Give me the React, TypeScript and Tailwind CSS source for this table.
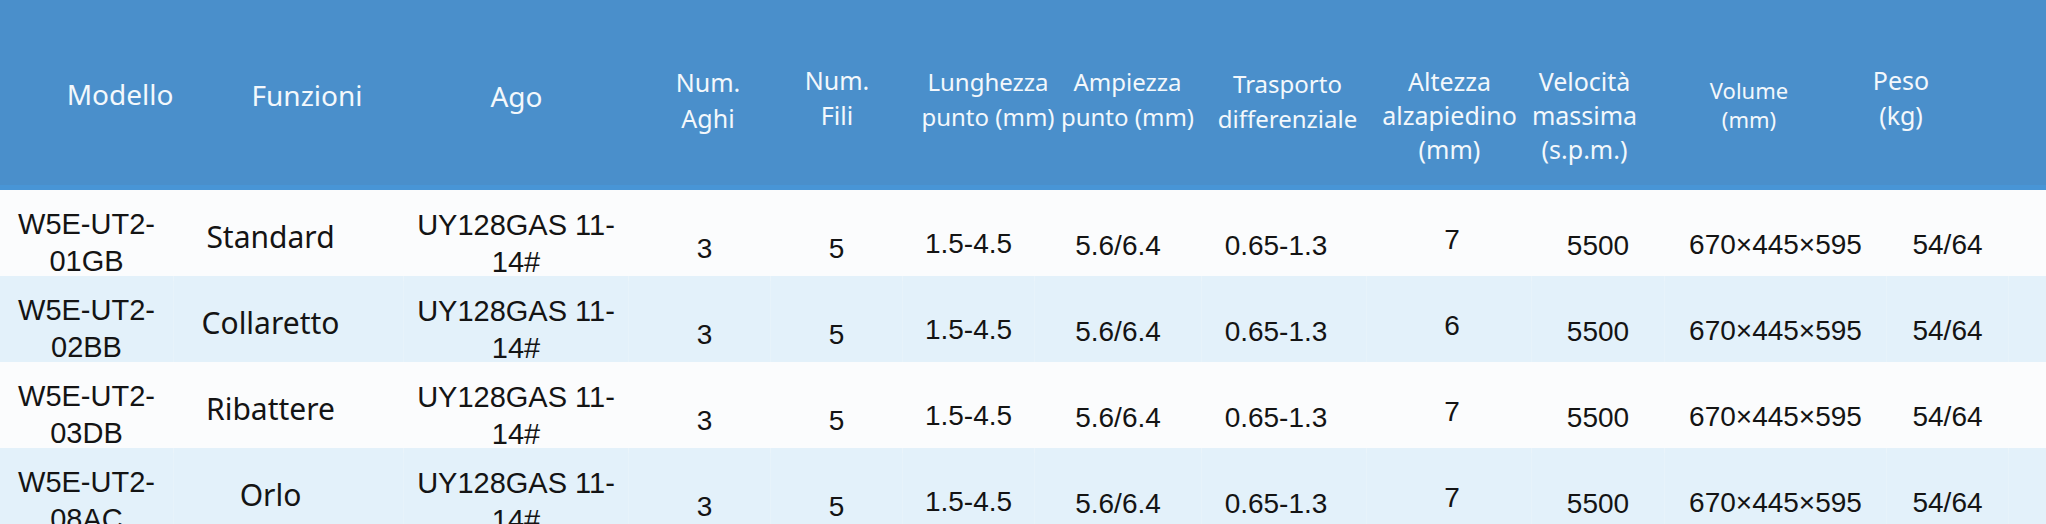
import React from "react";

type Head = { lines: string[]; cls: string };

const heads: Head[] = [
    { lines: ["Modello"], cls: "pl-[66px] pt-[77px] text-[28px] leading-[35px]" },
    { lines: ["Funzioni"], cls: "pl-[36px] pt-[78px] text-[28px] leading-[35px]" },
    { lines: ["Ago"], cls: "pt-[79px] text-[28px] leading-[35px]" },
    { lines: ["Num.", "Aghi"], cls: "pl-[16px] pt-[64px] text-[25px] leading-[36px]" },
    { lines: ["Num.", "Fili"], cls: "pt-[63px] text-[25px] leading-[35px]" },
    { lines: ["Lunghezza", "punto (mm)"], cls: "pl-[38px] pt-[64px] text-[24px] leading-[35px]" },
    { lines: ["Ampiezza", "punto (mm)"], cls: "pl-[18px] pt-[64px] text-[24px] leading-[35px]" },
    { lines: ["Trasporto", "differenziale"], cls: "pl-[6px] pt-[66px] text-[24px] leading-[35px]" },
    { lines: ["Altezza", "alzapiedino", "(mm)"], cls: "pt-[64px] text-[25px] leading-[34px]" },
    { lines: ["Velocità", "massima", "(s.p.m.)"], cls: "pr-[28px] pt-[64px] text-[25px] leading-[34px]" },
    { lines: ["Volume", "(mm)"], cls: "pr-[54px] pt-[76px] text-[22px] leading-[29px]" },
    { lines: ["Peso", "(kg)"], cls: "pr-[94px] pt-[63px] text-[25px] leading-[35px]" },
];

const rows = [
    { model: ["W5E-UT2-", "01GB"], fn: "Standard", foot: "7" },
    { model: ["W5E-UT2-", "02BB"], fn: "Collaretto", foot: "6" },
    { model: ["W5E-UT2-", "03DB"], fn: "Ribattere", foot: "7" },
    { model: ["W5E-UT2-", "08AC"], fn: "Orlo", foot: "7" },
];

const grid =
    "grid grid-cols-[174px_230px_225px_142px_132px_132px_167px_165px_165px_133px_222px_122px_1fr]";

const arial = "font-['Liberation_Sans',Arial,sans-serif]";
const noto = "font-['Noto_Sans',sans-serif]";

function Num({ v, cls }: { v: string; cls: string }) {
    return (
        <div className={`flex justify-center whitespace-nowrap border-r border-white/15 text-[28px] leading-[36px] ${arial} ${cls}`}>
            {v}
        </div>
    );
}

export default function App() {
    return (
        <div className="h-screen w-full overflow-hidden bg-white">
            {/* Header */}
            <div className={`${grid} h-[190px] border-b-[5px] border-[#4895d6] bg-[#4a8fcb] text-[#f3f8fc] ${noto}`}>
                {heads.map((h, i) => (
                    <div key={i} className={`flex flex-col items-center whitespace-nowrap ${h.cls}`}>
                        {h.lines.map((l) => (
                            <span key={l}>{l}</span>
                        ))}
                    </div>
                ))}
                <div />
            </div>

            {/* Rows */}
            {rows.map((r, i) => (
                <div
                    key={i}
                    className={`${grid} h-[86px] text-[#141414] ${i % 2 === 0 ? "bg-[#fbfcfd]" : "bg-[#e3f1fa]"}`}
                >
                    <div className={`flex flex-col items-center border-r border-white/15 pt-[16px] text-[29px] leading-[37px] ${arial}`}>
                        {r.model.map((l) => (
                            <span key={l}>{l}</span>
                        ))}
                    </div>
                    <div className={`flex justify-center border-r border-white/15 pr-[36px] pt-[29px] text-[30px] leading-[36px] ${noto}`}>
                        {r.fn}
                    </div>
                    <div className={`flex flex-col items-center border-r border-white/15 pt-[17px] text-[29px] leading-[37px] ${arial}`}>
                        <span>UY128GAS 11-</span>
                        <span>14#</span>
                    </div>
                    <Num v="3" cls="pl-[10px] pt-[41px]" />
                    <Num v="5" cls="pt-[41px]" />
                    <Num v="1.5-4.5" cls="pt-[36px]" />
                    <Num v="5.6/6.4" cls="pt-[38px]" />
                    <Num v="0.65-1.3" cls="pr-[16px] pt-[38px]" />
                    <Num v={r.foot} cls="pl-[6px] pt-[32px]" />
                    <Num v="5500" cls="pt-[38px]" />
                    <Num v="670×445×595" cls="pt-[37px]" />
                    <Num v="54/64" cls="pt-[37px]" />
                    <div />
                </div>
            ))}
        </div>
    );
}
